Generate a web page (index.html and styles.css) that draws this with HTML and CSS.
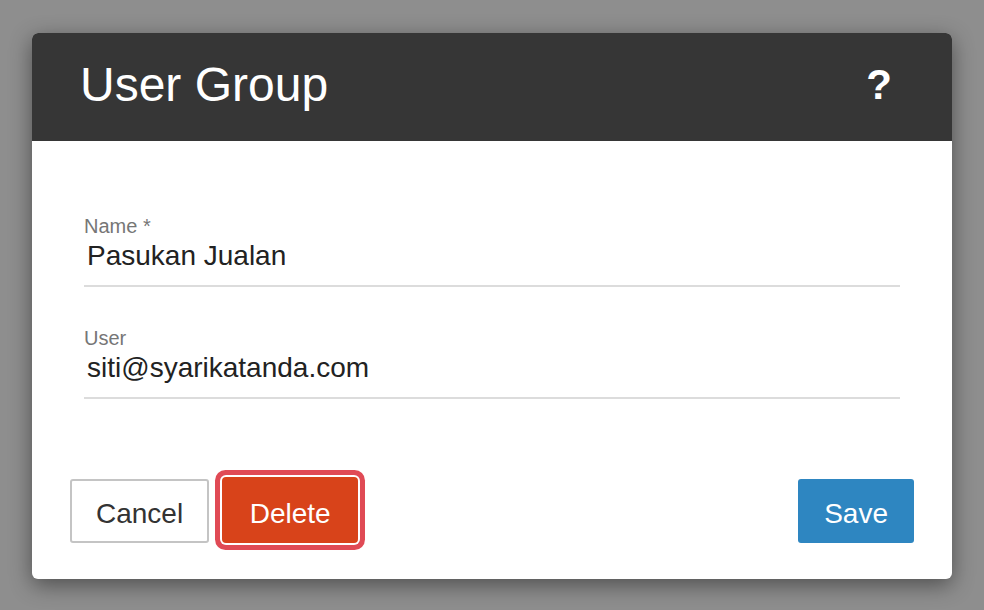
FILE: index.html
```html
<!DOCTYPE html>
<html lang="en">
<head>
    <meta charset="UTF-8">
    <meta name="viewport" content="width=device-width, initial-scale=1.0">
    <title>User Group</title>
    <link rel="stylesheet" href="styles.css">
</head>
<body>
    <div class="dialog">
        <div class="dialog-header">
            <h1>User Group</h1>
            <button class="help" type="button">?</button>
        </div>
        <form class="dialog-body" id="groupForm">
            <div class="form-group">
                <label for="groupName">Name *</label>
                <input type="text" id="groupName" name="groupName" value="Pasukan Jualan" required>
            </div>
            <div class="form-group">
                <label for="groupUser">User</label>
                <input type="text" id="groupUser" name="groupUser" value="siti@syarikatanda.com">
            </div>
            <div class="actions">
                <button type="button" class="btn btn-cancel">Cancel</button>
                <button type="button" class="btn btn-delete">Delete</button>
                <button type="submit" class="btn btn-save">Save</button>
            </div>
        </form>
    </div>
</body>
</html>
```

FILE: styles.css
```css
body {
    margin: 0;
    padding: 33px 32px;
    background: #8e8e8e;
    font-family: "Liberation Sans", Arial, sans-serif;
}
.dialog {
    width: 920px;
    height: 546px;
    background: #fff;
    border-radius: 6px;
    overflow: hidden;
    box-shadow: 0 6px 22px rgba(0, 0, 0, 0.45);
}
.dialog-header {
    height: 108px;
    box-sizing: border-box;
    padding: 0 60px 5px 48px;
    background: #363636;
    display: flex;
    align-items: center;
    justify-content: space-between;
}
.dialog-header h1 {
    margin: 0;
    font-size: 48px;
    font-weight: normal;
    line-height: 1;
    color: #fff;
}
.help {
    background: none;
    border: none;
    padding: 0;
    color: #fff;
    font-family: inherit;
    font-size: 42px;
    font-weight: bold;
    line-height: 1;
    cursor: pointer;
}
.dialog-body {
    padding: 74px 52px 0;
}
.form-group {
    border-bottom: 2px solid #dcdcdc;
    padding-bottom: 13px;
    margin-bottom: 40px;
}
label {
    display: block;
    font-size: 20px;
    line-height: 23px;
    color: #767676;
    margin-bottom: 2px;
}
input {
    display: block;
    width: 100%;
    box-sizing: border-box;
    border: none;
    outline: none;
    padding: 0 0 0 3px;
    margin: 0;
    font-family: inherit;
    font-size: 28px;
    line-height: 32px;
    height: 32px;
    color: #222;
    background: transparent;
}
.actions {
    display: flex;
    align-items: flex-end;
    gap: 13px;
    margin: 78px -14px 0;
}
.btn {
    height: 64px;
    padding: 5px 26px 0;
    font-family: inherit;
    font-size: 28px;
    border-radius: 3px;
    cursor: pointer;
}
.btn-cancel {
    background: #fff;
    color: #333;
    border: 2px solid #c4c4c4;
    padding: 5px 24px 0;
}
/* focused delete: thin white gap, then the red focus ring */
.btn-delete {
    height: 66px;
    width: 136px;
    padding: 7px 0 0;
    background: #d8431a;
    color: #fff;
    border: none;
    border-radius: 4px;
    box-shadow: 0 0 0 2px #fff, 0 0 0 7px #e04a55;
}
.btn-save {
    margin-left: auto;
    background: #2e86c1;
    color: #fff;
    border: none;
}
```
